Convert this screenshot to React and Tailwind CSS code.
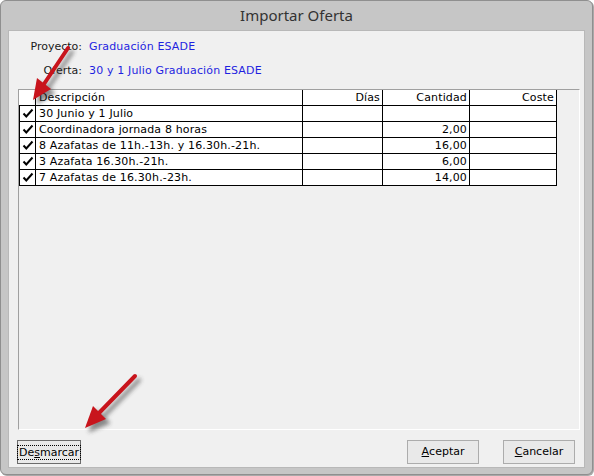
import React from "react";

const rows = [
  { desc: "30 Junio y 1 Julio", dias: "", cant: "", coste: "" },
  { desc: "Coordinadora jornada 8 horas", dias: "", cant: "2,00", coste: "" },
  { desc: "8 Azafatas de 11h.-13h. y 16.30h.-21h.", dias: "", cant: "16,00", coste: "" },
  { desc: "3 Azafata 16.30h.-21h.", dias: "", cant: "6,00", coste: "" },
  { desc: "7 Azafatas de 16.30h.-23h.", dias: "", cant: "14,00", coste: "" },
];

function Check() {
  return (
    <svg width="12" height="11" viewBox="0 0 12 11" className="block">
      <path d="M1.5 5.5 L4.3 8.5 L10.5 1.5" fill="none" stroke="#000" strokeWidth="2" strokeLinejoin="miter" />
    </svg>
  );
}

function Arrow({ tail, tip, base, c1, c2 }) {
  return (
    <g>
      <line x1={tail[0]} y1={tail[1]} x2={base[0]} y2={base[1]} stroke="#c8141c" strokeWidth="4" strokeLinecap="round" />
      <polygon points={`${tip[0]},${tip[1]} ${c1[0]},${c1[1]} ${c2[0]},${c2[1]}`} fill="#c8141c" />
    </g>
  );
}

function Btn({ children, focused }) {
  return (
    <button
      className={
        "h-[24px] flex items-center justify-center text-[11px] text-black bg-[#e9e9e9] " +
        (focused ? "w-[64px] border border-[#6b6b6b]" : "w-[72px] border border-[#acacac]")
      }
    >
      {focused ? (
        <span className="px-[1px] leading-[13px] outline-1 outline-dotted outline-black">{children}</span>
      ) : (
        children
      )}
    </button>
  );
}

export default function App() {
  return (
    <div className="w-[594px] h-[476px] bg-white" style={{ fontFamily: '"DejaVu Sans", sans-serif' }}>
      <div className="relative w-[593px] h-[475px] rounded-[6px] border border-[#8f8f8f] bg-[#c6c6c6] shadow-[1px_1px_0_#a9a9a9] flex flex-col">
        {/* title bar */}
        <div className="h-[29px] flex items-center justify-center text-[15px] text-[#333333]" style={{ fontFamily: '"Noto Sans", "Open Sans", sans-serif' }}>
          Importar Oferta
        </div>
        {/* client area */}
        <div className="mx-[7px] mb-[6px] flex-1 bg-[#f0f0f0] border border-[#b8b8b8] flex flex-col">
          <div className="pt-[8px] pl-[10px] flex flex-col gap-[8px] text-[11px]">
            <div className="flex h-[16px] items-center">
              <span className="w-[63px] text-right text-[#1a1a1a]">Proyecto:</span>
              <span className="ml-[7px] text-[#1f1fe0] tracking-[0.15px]">Graduación ESADE</span>
            </div>
            <div className="flex h-[16px] items-center">
              <span className="w-[63px] text-right text-[#1a1a1a]">Oferta:</span>
              <span className="ml-[7px] text-[#1f1fe0] tracking-[0.15px]">30 y 1 Julio Graduación ESADE</span>
            </div>
          </div>

          {/* grid */}
          <div className="mt-[10px] ml-[9px] w-[562px] h-[341px] border-t border-l border-[#a0a0a0] border-b border-r border-b-white border-r-white text-[11px] text-black tracking-[0.15px]">
            <div className="flex h-[16px]">
              <div className="w-[17px] bg-white border-r border-b border-black"></div>
              <div className="w-[267px] bg-white border-r border-b border-black pl-[3px] leading-[15px]">Descripción</div>
              <div className="w-[80px] bg-white border-r border-b border-black pr-[2px] text-right leading-[15px]">Días</div>
              <div className="w-[87px] bg-white border-r border-b border-black pr-[2px] text-right leading-[15px]">Cantidad</div>
              <div className="w-[87px] bg-white border-r border-b border-black pr-[2px] text-right leading-[15px]">Coste</div>
            </div>
            {rows.map((r, i) => (
              <div key={i} className="flex h-[16px]">
                <div className="w-[17px] bg-white border-l border-r border-b border-black flex items-center justify-center">
                  <Check />
                </div>
                <div className="w-[267px] bg-white border-r border-b border-black pl-[3px] leading-[15px] whitespace-nowrap">{r.desc}</div>
                <div className="w-[80px] bg-white border-r border-b border-black pr-[2px] text-right leading-[15px]">{r.dias}</div>
                <div className="w-[87px] bg-white border-r border-b border-black pr-[2px] text-right leading-[15px]">{r.cant}</div>
                <div className="w-[87px] bg-white border-r border-b border-black pr-[2px] text-right leading-[15px]">{r.coste}</div>
              </div>
            ))}
          </div>

          {/* buttons */}
          <div className="mt-[10px] flex items-center pl-[8px] pr-[9px]">
            <Btn focused>
              De<span className="underline">s</span>marcar
            </Btn>
            <div className="flex-1"></div>
            <Btn>
              <span className="underline">A</span>ceptar
            </Btn>
            <div className="w-[24px]"></div>
            <Btn>
              <span className="underline">C</span>ancelar
            </Btn>
          </div>
        </div>

        {/* annotation arrows */}
        <svg className="absolute left-[-1px] top-[-1px] pointer-events-none" width="594" height="476">
          <defs>
            <filter id="shade" x="-50%" y="-50%" width="200%" height="200%">
              <feGaussianBlur stdDeviation="2" />
            </filter>
          </defs>
          <g transform="translate(4 4)" filter="url(#shade)" opacity="0.55">
            <g fill="#333" stroke="#333">
              <line x1="68" y1="48" x2="44" y2="84" strokeWidth="4" strokeLinecap="round" />
              <polygon points="33,100 51,89 37,78" />
              <line x1="135" y1="376" x2="99" y2="413" strokeWidth="4" strokeLinecap="round" />
              <polygon points="85,428 106,419 93,406" />
            </g>
          </g>
          <Arrow tail={[68, 48]} base={[44, 84]} tip={[33, 100]} c1={[51, 89]} c2={[37, 78]} />
          <Arrow tail={[135, 376]} base={[99, 413]} tip={[85, 428]} c1={[106, 419]} c2={[93, 406]} />
        </svg>
      </div>
    </div>
  );
}
